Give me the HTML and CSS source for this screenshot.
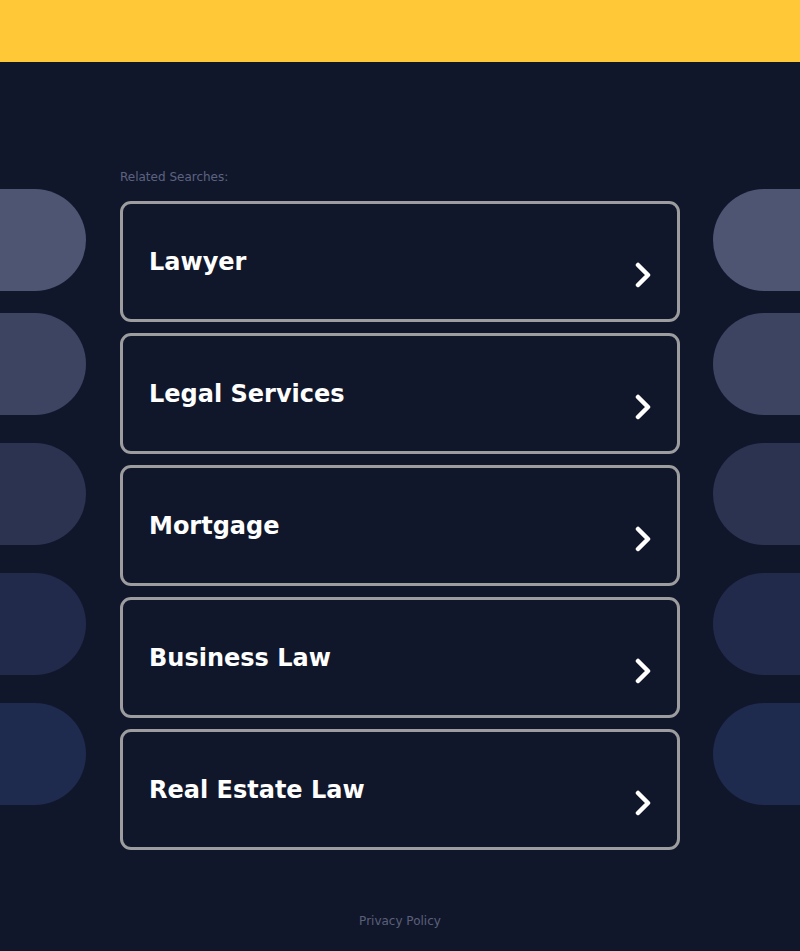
FILE: index.html
```html
<!DOCTYPE html>
<html>
<head>
<meta charset="utf-8">
<link rel="stylesheet" href="styles.css">
</head>
<body>
<div class="topbar"></div>
<div class="layout">
  <div class="side side-left">
    <div class="pill p1"></div>
    <div class="pill p2"></div>
    <div class="pill p3"></div>
    <div class="pill p4"></div>
    <div class="pill p5"></div>
  </div>
  <main class="main">
    <div class="related">Related Searches:</div>
    <div class="cards">
      <a class="card" href="#"><span class="title">Lawyer</span><svg class="chev" viewBox="0 0 16 26"><path d="M3 3 L13 13 L3 23" fill="none" stroke="#fff" stroke-width="4.5" stroke-linecap="round" stroke-linejoin="round"/></svg></a>
      <a class="card" href="#"><span class="title">Legal Services</span><svg class="chev" viewBox="0 0 16 26"><path d="M3 3 L13 13 L3 23" fill="none" stroke="#fff" stroke-width="4.5" stroke-linecap="round" stroke-linejoin="round"/></svg></a>
      <a class="card" href="#"><span class="title">Mortgage</span><svg class="chev" viewBox="0 0 16 26"><path d="M3 3 L13 13 L3 23" fill="none" stroke="#fff" stroke-width="4.5" stroke-linecap="round" stroke-linejoin="round"/></svg></a>
      <a class="card" href="#"><span class="title">Business Law</span><svg class="chev" viewBox="0 0 16 26"><path d="M3 3 L13 13 L3 23" fill="none" stroke="#fff" stroke-width="4.5" stroke-linecap="round" stroke-linejoin="round"/></svg></a>
      <a class="card" href="#"><span class="title">Real Estate Law</span><svg class="chev" viewBox="0 0 16 26"><path d="M3 3 L13 13 L3 23" fill="none" stroke="#fff" stroke-width="4.5" stroke-linecap="round" stroke-linejoin="round"/></svg></a>
    </div>
  </main>
  <div class="side side-right">
    <div class="pill p1"></div>
    <div class="pill p2"></div>
    <div class="pill p3"></div>
    <div class="pill p4"></div>
    <div class="pill p5"></div>
  </div>
</div>
<footer class="footer"><a href="#">Privacy Policy</a></footer>
</body>
</html>
```

FILE: styles.css
```css
html, body {
  margin: 0;
  padding: 0;
}
body {
  background: #11172b;
  font-family: "DejaVu Sans", "Liberation Sans", sans-serif;
  min-height: 951px;
}
.topbar {
  height: 62px;
  background: #ffc836;
}
.layout {
  display: grid;
  grid-template-columns: 86px 1fr 87px;
}
.main {
  width: 560px;
  margin-left: 34px;
  padding-top: 108px;
}
.related {
  font-size: 12px;
  color: #5c6381;
  line-height: 14px;
  height: 14px;
  margin-bottom: 17px;
}
.cards {
  display: flex;
  flex-direction: column;
  gap: 11px;
}
.card {
  display: flex;
  align-items: flex-start;
  justify-content: space-between;
  box-sizing: border-box;
  height: 121px;
  border: 3px solid #9d9da0;
  border-radius: 11px;
  padding: 41px 26px 0 26px;
  text-decoration: none;
}
.title {
  color: #ffffff;
  font-weight: bold;
  font-size: 24px;
  line-height: 34px;
}
.chev {
  width: 16px;
  height: 26px;
  margin-top: 17px;
  margin-right: 0;
}
.side {
  display: flex;
  flex-direction: column;
  padding-top: 127px;
}
.pill {
  height: 102px;
  margin-bottom: 28px;
}
.pill.p1 { margin-bottom: 22px; }
.side-left .pill { border-radius: 0 51px 51px 0; }
.side-right .pill { border-radius: 51px 0 0 51px; }
.p1 { background: #4d5573; }
.p2 { background: #3d4462; }
.p3 { background: #2c3351; }
.p4 { background: #212a4b; }
.p5 { background: #1f2a4f; }
.footer {
  text-align: center;
  padding-top: 60px;
}
.footer a {
  font-size: 12px;
  color: #5b6079;
  text-decoration: none;
}
```
